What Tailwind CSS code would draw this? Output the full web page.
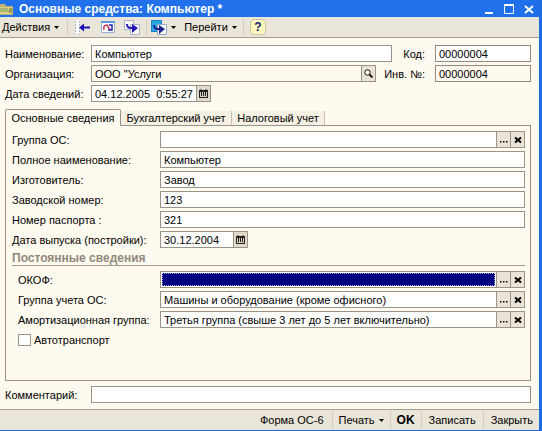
<!DOCTYPE html>
<html lang="ru">
<head>
<meta charset="utf-8">
<meta name="viewport" content="width=device-width, initial-scale=1">
<title>Основные средства: Компьютер</title>
<script src="https://cdn.jsdelivr.net/npm/@tailwindcss/browser@4"></script>
</head>
<body class="flex min-h-screen flex-col border-r-3 border-b border-[#1f6be0] bg-[#fffaef] font-['Liberation_Sans',Arial,sans-serif] text-[11px] leading-[18px] text-black">

<svg class="hidden" aria-hidden="true">
  <symbol id="cross" viewBox="0 0 8 8"><path d="M1 1.500 L7 6.500 M7 1.500 L1 6.500" stroke="#000" stroke-width="2"/></symbol>
  <symbol id="dots" viewBox="0 0 8 8"><path d="M0 5h1.500v1.500H0zM3 5h1.500v1.500H3zM6 5h1.500v1.500H6z"/></symbol>
  <symbol id="down" viewBox="0 0 5 3"><path d="M0 0h5L2.500 3z"/></symbol>
  <symbol id="calendar" viewBox="0 0 9 9"><path d="M0 1h9v8H0z" fill="#222"/><path d="M1 3h7v5H1z" fill="#d8d0c0"/><path d="M2.500 3v4M4.500 3v4M6.500 3v4" stroke="#222"/><path d="M2 0v2M7 0v2" stroke="#222"/></symbol>
</svg>

<header class="flex h-[17px] items-center bg-[#1f70ea] text-white">
  <svg class="h-3 w-[13px]" viewBox="0 0 13 12" aria-hidden="true"><path d="M0 1h5l1 2h7v9H0z" fill="#b9b46a"/><path d="M0 4h12v7H0z" fill="#d8d08a"/><path d="M0 6h8M0 8h9" stroke="#7d9a58"/><path d="M9 5h3v5H9z" fill="#9c9a50"/></svg>
  <h1 class="ml-1.5 flex-1 text-xs leading-4 font-bold whitespace-nowrap">Основные средства: Компьютер *</h1>
  <div class="mr-1 flex items-center gap-2">
    <button class="h-3 w-3" aria-label="Свернуть"><svg class="h-3 w-3" viewBox="0 0 12 12"><path d="M2 9h8v2H2z" fill="#fff"/></svg></button>
    <button class="h-3 w-3" aria-label="Развернуть"><svg class="h-3 w-3" viewBox="0 0 12 12"><path d="M1.500 2.500h9v8h-9z" fill="none" stroke="#fff"/><path d="M1 2h10" stroke="#fff" stroke-width="2"/></svg></button>
    <button class="h-3 w-3" aria-label="Закрыть окно"><svg class="h-3 w-3" viewBox="0 0 12 12"><path d="M2 3l8 7M10 3l-8 7" stroke="#fff" stroke-width="2"/></svg></button>
  </div>
</header>

<nav class="flex h-[21px] items-center border-b border-[#a49d90] bg-[#eae5d9]" aria-label="Действия">
  <button class="ml-0.5 flex items-center gap-1">Действия <svg class="h-[3px] w-[5px]"><use href="#down"/></svg></button>
  <span class="ml-2 h-4 w-px bg-[#d3ccbd]"></span>
  <button class="ml-1.5" aria-label="Назад"><svg class="h-4 w-4" viewBox="0 0 16 16"><path d="M1 1h5v14H1z" fill="#fff"/><path d="M1.500 2v13M5.500 2v13" stroke="#b4b4cc" stroke-dasharray="2 1"/><path d="M5 8.500l5-4v3h6v2h-6v3z" fill="#1c12b4"/></svg></button>
  <button class="ml-2.5" aria-label="Перечитать"><svg class="h-4 w-4" viewBox="0 0 16 16"><path d="M1.500 2.500h13v11h-13z" fill="#fff" stroke="#9ab0d4"/><path d="M1 2h14v2H1z" fill="#5a9ae0"/><path d="M4 11q-1-5 3-5l3 5" fill="none" stroke="#c4384c" stroke-width="1.500"/><path d="M8 11h4V6H9" fill="none" stroke="#2020b0" stroke-width="1.500"/></svg></button>
  <button class="ml-2" aria-label="Скопировать"><svg class="h-4 w-4" viewBox="0 0 16 16"><path d="M.5 1.500h9v9h-9z" fill="#fff" stroke="#a9b2c8"/><path d="M6.500 5.500h9v10h-9z" fill="#fff" stroke="#a9b2c8"/><path d="M3 5q0 4 4 4h2" fill="none" stroke="#2418b8" stroke-width="2"/><path d="M8 5l6 4-6 5z" fill="#2418b8"/></svg></button>
  <span class="ml-1.5 h-4 w-px bg-[#d3ccbd]"></span>
  <button class="ml-1 flex items-center gap-1" aria-label="Ввести на основании"><svg class="h-4 w-4" viewBox="0 0 16 16"><path d="M.5 1.500h10v11H.5z" fill="#27a9e6" stroke="#1a80c0"/><path d="M6.500 5.500h9v10h-9z" fill="#fff" stroke="#8fa9c8"/><path d="M3 6q0 4 4 4h2" fill="none" stroke="#1c2090" stroke-width="2"/><path d="M8 6l6 4-6 5z" fill="#1c2090"/></svg><svg class="h-[3px] w-[5px]"><use href="#down"/></svg></button>
  <button class="ml-2 flex items-center gap-1">Перейти <svg class="h-[3px] w-[5px]"><use href="#down"/></svg></button>
  <span class="ml-1.5 h-4 w-px bg-[#d3ccbd]"></span>
  <button class="ml-1.5 h-4 w-4 rounded-sm border border-[#c9c3a8] bg-[#fff9bd] text-xs leading-3.5 font-bold text-[#1c1c70]" aria-label="Справка">?</button>
</nav>

<main class="flex flex-1 flex-col px-[5px] pt-[7px] pr-2 pb-1.5">
  <div class="grid auto-rows-[17px] grid-cols-[86px_1fr] gap-y-[3px]">
    <label for="name">Наименование:</label>
    <div class="flex items-stretch">
      <input id="name" value="Компьютер" class="min-w-0 flex-1 border border-[#9a9488] bg-white px-[3px]">
      <label for="code" class="w-[43px] pr-2.5 text-right">Код:</label>
      <input id="code" value="00000004" class="w-24 border border-[#9a8880] bg-white px-[3px]">
    </div>
    <label for="org">Организация:</label>
    <div class="flex items-stretch">
      <input id="org" value="ООО &quot;Услуги" class="min-w-0 flex-1 border border-[#9a9488] bg-[#fffaef] px-[3px]">
      <button class="-ml-px flex w-[15px] items-center justify-center border border-[#9a9488] bg-[#e9e3d6]" aria-label="Открыть организацию"><svg class="h-[9px] w-[9px]" viewBox="0 0 9 9"><circle cx="3.500" cy="3.500" r="2.700" fill="#fff" stroke="#111"/><path d="M5.500 5.500L8.500 8.500" stroke="#111" stroke-width="1.800"/></svg></button>
      <label for="inv" class="w-[59px] pr-2.5 text-right">Инв. №:</label>
      <input id="inv" value="00000004" class="w-24 border border-[#9a8880] bg-[#fffaef] px-[3px]">
    </div>
    <label for="date">Дата сведений:</label>
    <div class="flex items-stretch">
      <input id="date" value="04.12.2005  0:55:27" class="w-[106px] border border-[#9a9488] bg-white px-[3px] whitespace-pre">
      <button class="-ml-px flex w-[15px] items-center justify-center border border-[#9a9488] bg-[#e0d8c8]" aria-label="Выбрать дату сведений"><svg class="h-[9px] w-[9px]"><use href="#calendar"/></svg></button>
    </div>
  </div>

  <div class="mt-[7px] flex items-end" role="tablist">
    <button role="tab" aria-selected="true" class="relative z-10 -mb-px h-[17px] w-[116px] rounded-t-xs border border-b-0 border-[#9a9488] bg-[#fffaef] leading-4">Основные сведения</button>
    <button role="tab" aria-selected="false" class="h-[14px] w-[111px] border-r border-[#c8c0b0] bg-[#f5f0e4] leading-3.5">Бухгалтерский учет</button>
    <button role="tab" aria-selected="false" class="h-[14px] w-[93px] border-r border-[#c8c0b0] bg-[#f5f0e4] leading-3.5">Налоговый учет</button>
  </div>

  <section role="tabpanel" aria-label="Основные сведения" class="flex-1 border border-[#9a9488] border-r-[#a08880] pt-[5px] pr-[5px] pl-[6px]">
    <div class="grid auto-rows-[17px] grid-cols-[148px_1fr] gap-y-[3px]">
      <label for="group">Группа ОС:</label>
      <div class="flex items-stretch">
        <input id="group" class="min-w-0 flex-1 border border-[#9a9488] bg-white px-[3px]">
        <button class="-ml-px flex w-[15px] items-center justify-center border border-[#9a9488] bg-[#eae4d8]" aria-label="Выбрать группу"><svg class="h-2 w-2"><use href="#dots"/></svg></button>
        <button class="-ml-px flex w-[15px] items-center justify-center border border-[#9a9488] bg-[#eae4d8]" aria-label="Очистить группу"><svg class="h-2 w-2"><use href="#cross"/></svg></button>
      </div>
      <label for="full">Полное наименование:</label>
      <input id="full" value="Компьютер" class="min-w-0 border border-[#9a9488] bg-white px-[3px]">
      <label for="maker">Изготовитель:</label>
      <input id="maker" value="Завод" class="min-w-0 border border-[#9a9488] bg-white px-[3px]">
      <label for="serial">Заводской номер:</label>
      <input id="serial" value="123" class="min-w-0 border border-[#9a9488] bg-white px-[3px]">
      <label for="passport">Номер паспорта :</label>
      <input id="passport" value="321" class="min-w-0 border border-[#9a9488] bg-white px-[3px]">
      <label for="issued" class="whitespace-nowrap">Дата выпуска (постройки):</label>
      <div class="flex items-stretch">
        <input id="issued" value="30.12.2004" class="w-[74px] border border-[#9a9488] bg-white px-[3px]">
        <button class="-ml-px flex w-[15px] items-center justify-center border border-[#9a9488] bg-[#e0d8c8]" aria-label="Выбрать дату выпуска"><svg class="h-[9px] w-[9px]"><use href="#calendar"/></svg></button>
      </div>
    </div>

    <h2 class="mt-[3px] border-b border-[#a49d90] text-xs leading-3.5 font-bold text-[#8f897c]">Постоянные сведения</h2>

    <div class="mt-[5px] grid auto-rows-[17px] grid-cols-[142px_1fr] gap-y-[3px] pl-[6px]">
      <label for="okof">ОКОФ:</label>
      <div class="flex items-stretch">
        <div class="flex min-w-0 flex-1 border border-[#9a9488] bg-white p-px">
          <input id="okof" class="min-w-0 flex-1 border border-dotted border-[#a8a8d8] bg-[#000080] px-0.5 text-white">
        </div>
        <button class="-ml-px flex w-[15px] items-center justify-center border border-[#9a9488] bg-[#eae4d8]" aria-label="Выбрать ОКОФ"><svg class="h-2 w-2"><use href="#dots"/></svg></button>
        <button class="-ml-px flex w-[15px] items-center justify-center border border-[#9a9488] bg-[#eae4d8]" aria-label="Очистить ОКОФ"><svg class="h-2 w-2"><use href="#cross"/></svg></button>
      </div>
      <label for="account">Группа учета ОС:</label>
      <div class="flex items-stretch">
        <input id="account" value="Машины и оборудование (кроме офисного)" class="min-w-0 flex-1 border border-[#9a9488] bg-white px-[3px]">
        <button class="-ml-px flex w-[15px] items-center justify-center border border-[#9a9488] bg-[#eae4d8]" aria-label="Выбрать группу учета"><svg class="h-2 w-2"><use href="#dots"/></svg></button>
        <button class="-ml-px flex w-[15px] items-center justify-center border border-[#9a9488] bg-[#eae4d8]" aria-label="Очистить группу учета"><svg class="h-2 w-2"><use href="#cross"/></svg></button>
      </div>
      <label for="amort" class="whitespace-nowrap">Амортизационная группа:</label>
      <div class="flex items-stretch">
        <input id="amort" value="Третья группа (свыше 3 лет до 5 лет включительно)" class="min-w-0 flex-1 border border-[#9a9488] bg-white px-[3px]">
        <button class="-ml-px flex w-[15px] items-center justify-center border border-[#9a9488] bg-[#eae4d8]" aria-label="Выбрать амортизационную группу"><svg class="h-2 w-2"><use href="#dots"/></svg></button>
        <button class="-ml-px flex w-[15px] items-center justify-center border border-[#9a9488] bg-[#eae4d8]" aria-label="Очистить амортизационную группу"><svg class="h-2 w-2"><use href="#cross"/></svg></button>
      </div>
      <label class="flex items-center gap-[3px]"><input type="checkbox" class="h-3 w-[13px] appearance-none border border-[#9a9488] bg-white checked:bg-[#000080]">Автотранспорт</label>
    </div>
  </section>

  <div class="mt-[5px] grid auto-rows-[17px] grid-cols-[86px_1fr]">
    <label for="comment">Комментарий:</label>
    <input id="comment" class="min-w-0 border border-[#9a9488] border-r-[#a08880] bg-white px-[3px]">
  </div>
</main>

<footer class="flex h-[21px] items-center justify-end border-t border-[#a49d90] bg-[#eae5d9] pr-1.5">
  <button class="pr-2">Форма ОС-6</button>
  <button class="flex items-center gap-1 border-l border-[#d3ccbd] px-1.5">Печать <svg class="h-[3px] w-[5px]"><use href="#down"/></svg></button>
  <button class="border-l border-[#d3ccbd] px-1.5 text-xs leading-[18px] font-bold">OK</button>
  <button class="border-l border-[#d3ccbd] px-[7px]">Записать</button>
  <button class="border-l border-[#d3ccbd] pl-[7px]">Закрыть</button>
</footer>
</body>
</html>
